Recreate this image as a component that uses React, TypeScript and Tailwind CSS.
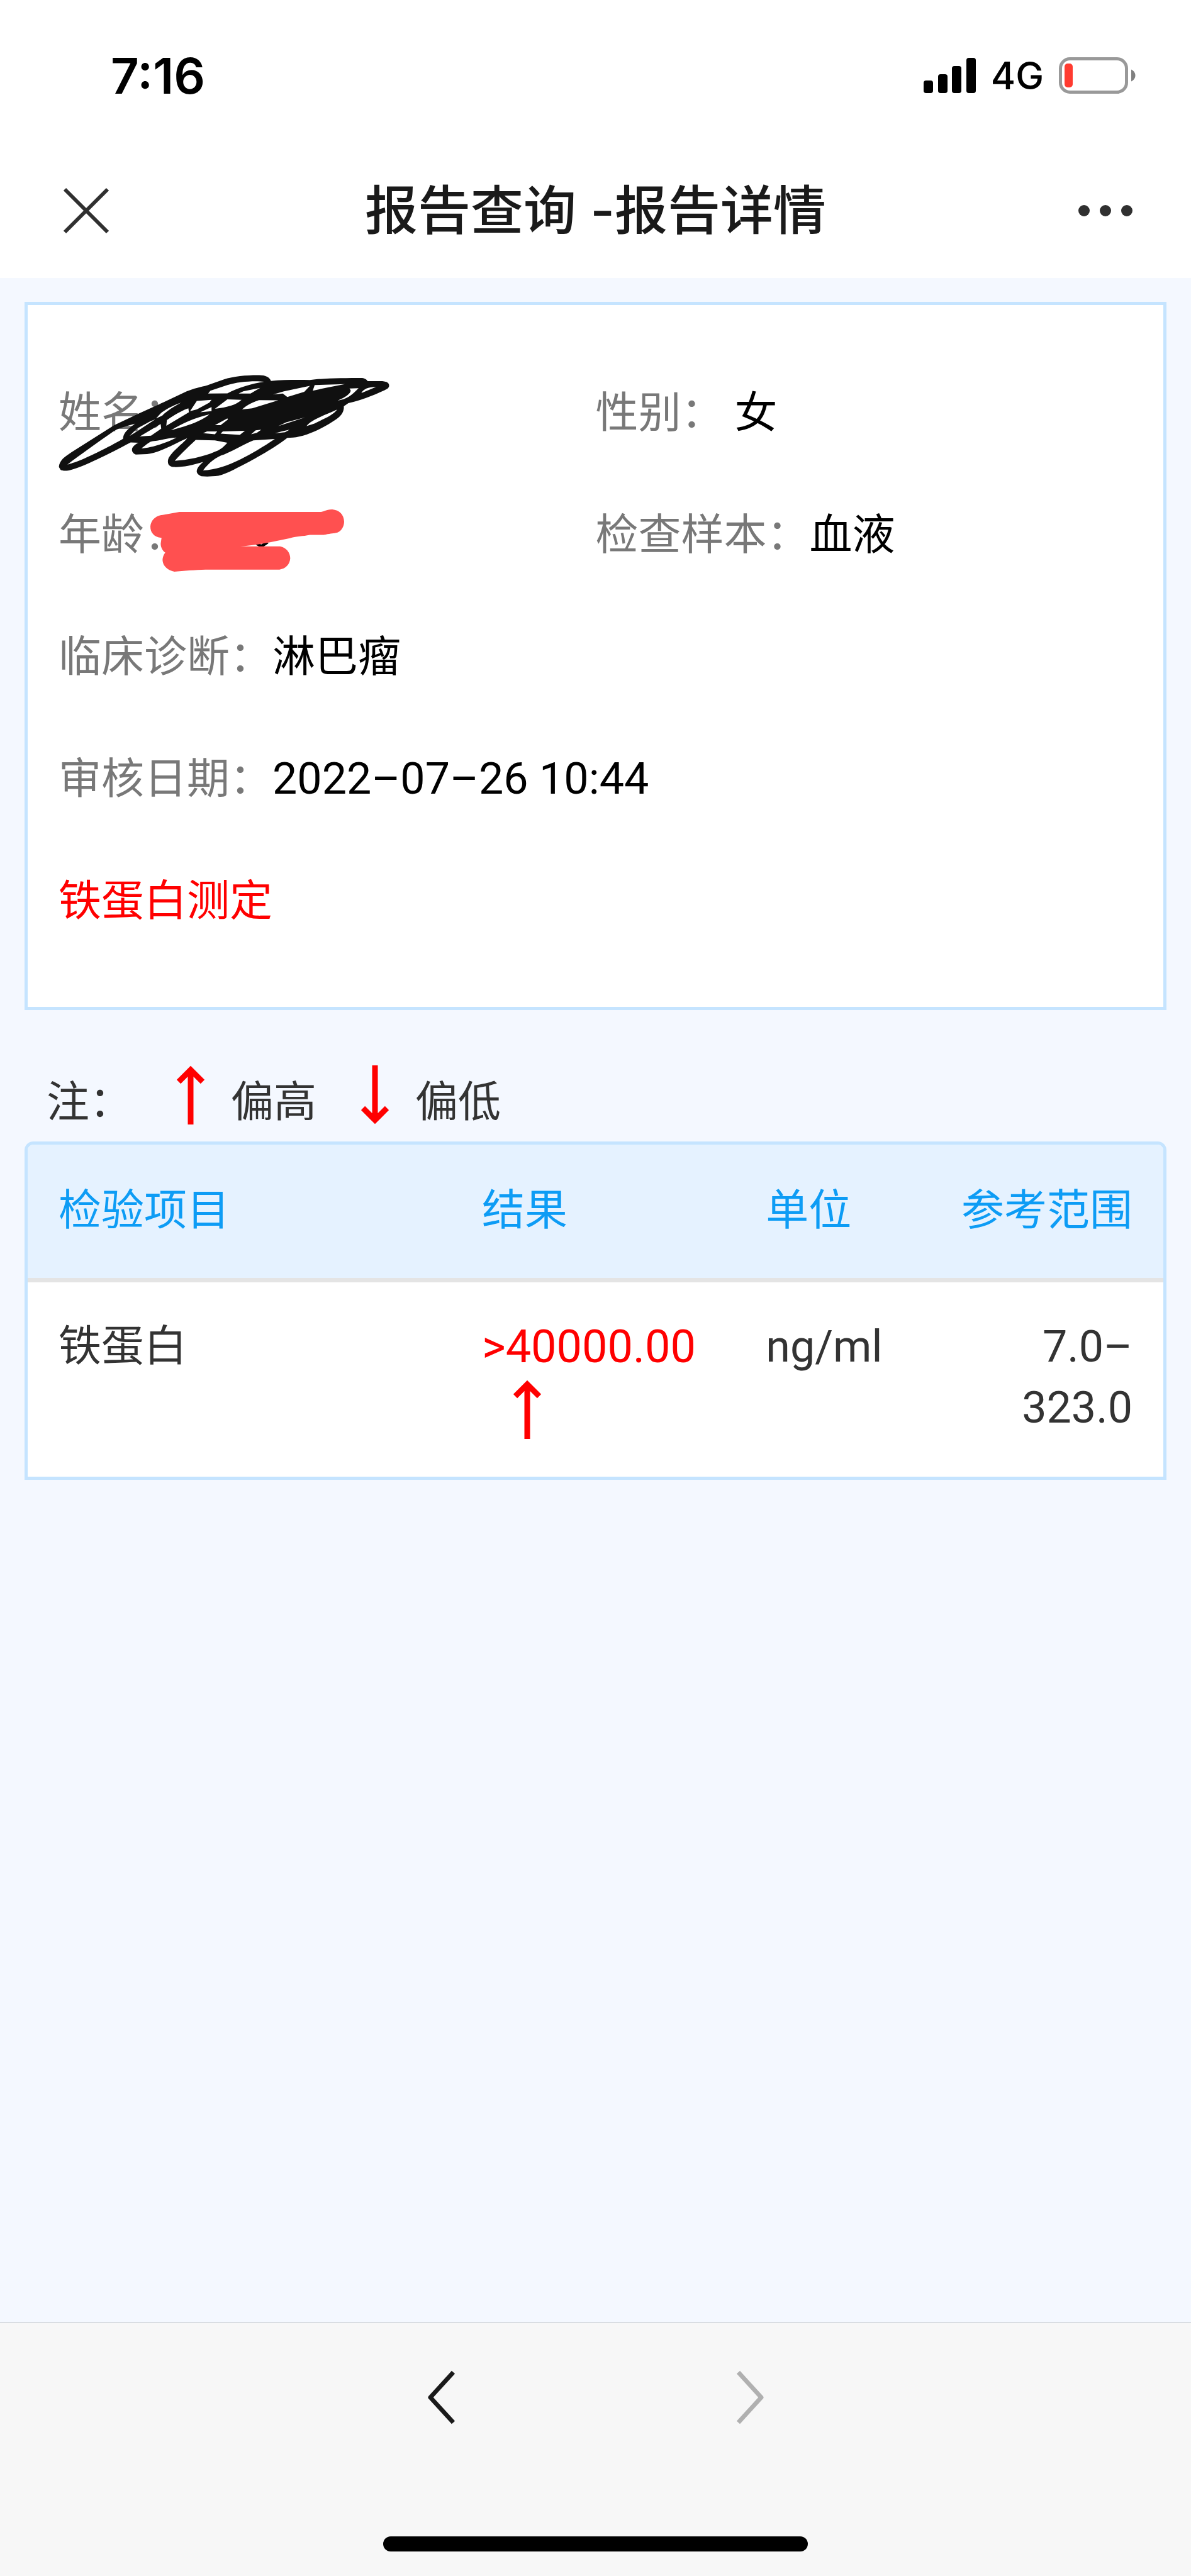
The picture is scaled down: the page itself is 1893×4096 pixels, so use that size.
import { ReactNode } from 'react';

type Result = {
  name: string;
  value: string;
  unit: string;
  range: string;
  high: boolean;
};

const results: Result[] = [
  { name: '铁蛋白', value: '>40000.00', unit: 'ng/ml', range: '7.0–323.0', high: true },
];

const Arrow = ({ down = false, className = '' }: { down?: boolean; className?: string }) => (
  <svg
    viewBox="0 0 44 94"
    className={`h-[94px] w-[44px] ${down ? 'rotate-180' : ''} ${className}`}
    fill="none"
    stroke="#ff0000"
    strokeWidth="9"
    aria-label={down ? '偏低' : '偏高'}
  >
    <path d="M22 94V7M3 26L22 7L41 26" />
  </svg>
);

const StatusBar = () => (
  <div className="flex h-[228px] items-center justify-between pt-3 pr-[88px] pl-[176px] font-['Inter',sans-serif] text-black">
    <span className="text-[78px] font-semibold">7:16</span>
    <div className="flex items-center">
      <svg viewBox="0 0 83 56" className="h-[56px] w-[83px]" fill="#000">
        <rect x="0" y="36" width="15" height="20" rx="4" />
        <rect x="23" y="26" width="15" height="30" rx="4" />
        <rect x="45" y="13" width="15" height="43" rx="4" />
        <rect x="68" y="0" width="15" height="56" rx="4" />
      </svg>
      <span className="ml-6 text-[60px] font-medium">4G</span>
      <svg viewBox="0 0 122 60" className="ml-6 h-[60px] w-[122px]">
        <rect x="2.5" y="3.5" width="105" height="53" rx="15" fill="none" stroke="#999" strokeWidth="5" />
        <rect x="9" y="11" width="13" height="38" rx="5" fill="#ff3b30" />
        <path d="M115 20.500C119 22.500 121.500 26 121.500 30S119 37.500 115 39.500Z" fill="#808080" />
      </svg>
    </div>
  </div>
);

const NavBar = () => (
  <div className="grid h-[214px] grid-cols-[1fr_auto_1fr] items-center pr-[92px] pl-[100px]">
    <button type="button" aria-label="关闭" className="justify-self-start">
      <svg viewBox="0 0 74 74" className="size-[74px]" fill="none" stroke="#303030" strokeWidth="6">
        <path d="M3 3L71 71M71 3L3 71" />
      </svg>
    </button>
    <h1 className="pr-2 font-['Inter','Noto_Sans_CJK_SC',sans-serif] text-[84px] leading-[120px] font-medium text-[#1a1a1a]">
      报告查询 -报告详情
    </h1>
    <button type="button" aria-label="更多" className="justify-self-end">
      <svg viewBox="0 0 88 20" className="h-[20px] w-[88px]" fill="#303030">
        <circle cx="10" cy="10" r="9" />
        <circle cx="44" cy="10" r="9" />
        <circle cx="78" cy="10" r="9" />
      </svg>
    </button>
  </div>
);

// 手绘涂抹：姓名
const BlackScribble = () => (
  <svg viewBox="0 0 3060 990" className="absolute top-7 -left-3 h-[178px] w-[550px]" fill="#101010" fillRule="evenodd">
    <path
      d="M70 860C75 800 120 770 180 730L560 490L780 385L1000 285L1200 190C1300 150 1350 150 1400 130L1530 85C1620 55 1760 45 1860 48C1910 50 1940 75 1945 98C2060 88 2180 88 2290 90C2400 75 2600 72 2750 72C2780 76 2795 90 2800 100L2930 100C2980 105 2992 120 2990 145C2985 165 2970 172 2950 180C2840 230 2740 270 2630 295L2590 322C2592 360 2580 400 2520 440C2420 510 2260 590 2140 600L2090 602C1960 700 1880 740 1760 810C1660 860 1560 920 1480 938C1420 945 1370 945 1330 942C1300 930 1285 910 1290 890C1295 860 1330 830 1345 815C1250 845 1150 865 1080 860C1045 855 1030 835 1035 800C1045 740 1160 660 1205 605C1100 650 950 740 850 745L750 750C715 735 712 710 720 690C735 665 760 650 775 645L705 642C500 750 300 850 180 885C140 897 100 895 85 885Z
      M145 838C250 760 400 650 560 540C620 505 670 500 745 475C670 530 640 560 637 610C500 690 350 760 260 800C210 820 170 832 145 838Z
      M695 585L760 520L880 455L920 440L760 545Z
      M785 590L970 480L975 520L885 582Z
      M930 430L965 390C1000 355 1080 315 1150 290C1060 340 1010 375 985 405Z
      M1025 445C1100 390 1180 350 1215 340L1220 375L1020 495Z
      M1230 365L1290 275L1420 265L1400 290L1290 350Z
      M1450 345L1560 262L1685 265C1640 310 1560 330 1450 345Z
      M1060 535C1150 480 1280 420 1400 395C1350 440 1250 480 1180 500Z
      M1320 375L1420 330L1420 365Z
      M1345 560L1380 545L1470 545L1450 570Z
      M1500 565L1520 545L1715 540L1670 575Z
      M1390 210L1410 185L1560 135C1650 105 1800 95 1885 105C1780 120 1650 160 1560 208Z
      M1660 210L1700 190L1850 160L1765 210Z
      M1690 350C1730 310 1800 280 1840 268L2010 270L1780 340Z
      M1965 218L2060 190L2290 142L2240 195L2090 240L2050 210Z
      M2332 135L2600 127L2450 155L2315 185Z
      M2640 165L2720 163C2690 190 2640 260 2535 272C2600 245 2655 210 2650 180Z
      M2745 205C2765 170 2800 155 2875 152Z
      M2260 498C2300 440 2450 390 2530 352C2500 400 2400 440 2330 475Z
      M2010 498L2080 465L2250 420Z
      M1770 570L1810 535L1860 530L1820 558Z
      M1980 562L2040 545L2110 530L2070 552Z
      M1095 805C1150 740 1240 660 1280 620L1450 625L1560 645C1520 690 1490 710 1450 725C1350 770 1200 800 1095 805Z
      M1345 890C1400 820 1460 770 1530 750C1650 700 1720 650 1790 625L1980 612C1880 680 1760 750 1680 790C1560 850 1450 885 1345 890Z
      M800 695C850 660 870 635 900 632C980 625 1040 600 1110 600C1020 650 880 690 800 695Z
      M1450 490L1560 430L1565 440L1500 490Z"
    />
  </svg>
);

// 手绘涂抹：年龄
const RedScribble = () => (
  <svg
    viewBox="468 1008 780 412"
    preserveAspectRatio="none"
    className="absolute top-14 left-[146px] h-[99px] w-[308px]"
  >
    <path d="M898 1236L915 1252L938 1226" fill="none" stroke="#000" strokeWidth="16" />
    <path
      d="M585 1025L1150 1025C1165 1025 1172 1010 1200 1008C1228 1012 1247 1040 1248 1090C1247 1130 1232 1160 1215 1163C1200 1168 1190 1168 1165 1177L1110 1177C1080 1188 1060 1184 1030 1198L950 1225C910 1237 880 1245 830 1253L990 1253C1015 1260 1031 1295 1031 1332C1030 1370 1012 1402 988 1406L690 1406C650 1408 600 1414 565 1420C540 1412 518 1385 517 1343C517 1325 522 1305 528 1294C515 1280 508 1250 510 1230L513 1196C485 1192 468 1165 468 1120C470 1080 490 1048 518 1044Z"
      fill="#ff5050"
    />
  </svg>
);

const Field = ({ label, wide = false, children }: { label: string; wide?: boolean; children?: ReactNode }) => (
  <div className={`relative ${wide ? 'col-span-2' : ''}`}>
    <dt className="inline text-[#787878]">{label}：</dt>
    <dd className="inline text-black">{children}</dd>
  </div>
);

const App = () => {
  return (
    <div className="flex min-h-screen flex-col bg-[#f4f8ff] font-['Roboto','Noto_Sans_CJK_SC',sans-serif] text-[68px] text-[#333]">
      <header className="bg-white">
        <StatusBar />
        <NavBar />
      </header>

      <main className="flex-1 px-[39px] pt-[38px]">
        <section className="border-[5px] border-[#c5e4ff] bg-white px-[49px] pt-[75px] pb-[71px]">
          <dl className="grid grid-cols-2 leading-[194px]">
            <Field label="姓名">
              <BlackScribble />
            </Field>
            <Field label="性别">&nbsp;女</Field>
            <Field label="年龄">
              <RedScribble />
            </Field>
            <Field label="检查样本">血液</Field>
            <Field label="临床诊断" wide>
              淋巴瘤
            </Field>
            <Field label="审核日期" wide>
              <span className="text-[70px] leading-none">2022–07–26 10:44</span>
            </Field>
          </dl>
          <p className="leading-[194px] text-[#ff0000]">铁蛋白测定</p>
        </section>

        <div className="mt-[88px] mb-[13px] flex items-end pl-[35px] leading-[97px]">
          <span>注：</span>
          <Arrow className="mb-[14px] ml-[71px]" />
          <span className="ml-[42px]">偏高</span>
          <Arrow down className="mb-[14px] ml-[71px]" />
          <span className="ml-[42px]">偏低</span>
        </div>

        <div className="overflow-hidden rounded-t-[14px] border-[5px] border-[#c5e4ff] bg-white">
          <table className="w-full table-fixed text-left leading-[97px]">
            <thead>
              <tr className="h-[215px] border-b-[7px] border-[#e4e4e4] bg-[#e5f2ff] text-[#0d9cf5]">
                <th className="w-[40%] pl-[49px] font-normal">检验项目</th>
                <th className="w-[25%] font-normal">结果</th>
                <th className="w-[17%] font-normal">单位</th>
                <th className="w-[18%] pr-[49px] text-right font-normal">参考范围</th>
              </tr>
            </thead>
            <tbody>
              {results.map((r) => (
                <tr key={r.name} className="align-top">
                  <td className="pt-[54px] pl-[49px]">{r.name}</td>
                  <td className="pt-[54px] text-[72px] text-[#ff0000]">
                    {r.value}
                    {r.high && <Arrow className="mt-1 ml-[50px]" />}
                  </td>
                  <td className="pt-[54px] text-[70px]">{r.unit}</td>
                  <td className="pt-[54px] pr-[49px] pb-[61px] text-right text-[70px]">{r.range}</td>
                </tr>
              ))}
            </tbody>
          </table>
        </div>
      </main>

      <footer className="flex h-[404px] flex-col items-center justify-between border-t-2 border-[#d9dde2] bg-[#f7f7f7] pt-[75px] pb-[39px]">
        <div className="flex gap-[448px]">
          <button type="button" aria-label="后退">
            <svg viewBox="0 0 43 86" className="h-[86px] w-[43px]" fill="none" stroke="#1a1a1a" strokeWidth="7" strokeLinejoin="round">
              <path d="M40.500 3L4 43L40.500 83" />
            </svg>
          </button>
          <button type="button" aria-label="前进" disabled>
            <svg viewBox="0 0 43 86" className="h-[86px] w-[43px]" fill="none" stroke="#b0b0b0" strokeWidth="7" strokeLinejoin="round">
              <path d="M2.500 3L39 43L2.500 83" />
            </svg>
          </button>
        </div>
        <div className="h-[24px] w-[675px] rounded-full bg-black" />
      </footer>
    </div>
  );
};

export default App;
